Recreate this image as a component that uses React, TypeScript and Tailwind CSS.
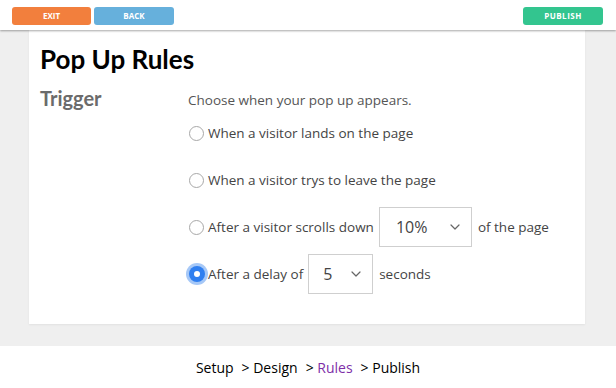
import { ReactNode } from 'react';

function Chevron() {
  return (
    <svg width="10" height="6" viewBox="0 0 10 6" className="text-[#666]">
      <path d="M1 1l4 4 4-4" fill="none" stroke="currentColor" strokeWidth="1.2" strokeLinecap="round" strokeLinejoin="round" />
    </svg>
  );
}

function Radio({ checked }: { checked?: boolean }) {
  if (checked) {
    return (
      <span className="flex h-[16px] w-[16px] shrink-0 items-center justify-center rounded-full bg-[#2f7ff0] shadow-[0_0_0_3px_#a6c8f7]">
        <span className="h-[6px] w-[6px] rounded-full bg-white" />
      </span>
    );
  }
  return <span className="h-[15px] w-[15px] shrink-0 rounded-full border border-[#a8a8a8] bg-white" />;
}

function Select({ value, width, pad }: { value: string; width: string; pad: string }) {
  return (
    <div className={`flex h-[40px] items-center justify-between border border-[#cfcfcf] bg-white pr-[11px] ${width} ${pad}`}>
      <span className="text-[16px] text-[#444]">{value}</span>
      <Chevron />
    </div>
  );
}

function Row({ checked, children }: { checked?: boolean; children: ReactNode }) {
  return (
    <div className="flex h-[40px] items-center">
      <div className="flex w-[20px] justify-start pl-[1px]">
        <Radio checked={checked} />
      </div>
      {children}
    </div>
  );
}

export default function App() {
  return (
    <div className="flex h-[388px] w-[616px] flex-col bg-white font-['Open_Sans',sans-serif]">
      <header className="relative z-10 flex h-[30px] shrink-0 items-start justify-between bg-white px-[12px] pt-[7px] shadow-[0_1px_2px_rgba(0,0,0,0.35)]">
        <div className="flex gap-[3px]">
          <button className="h-[18px] w-[79px] rounded-[3px] bg-[#f27f3d] text-[8px] font-bold text-white">EXIT</button>
          <button className="h-[18px] w-[80px] rounded-[3px] bg-[#66b0dc] text-[8px] font-bold text-white">BACK</button>
        </div>
        <button className="mr-[1px] h-[18px] w-[80px] rounded-[3px] bg-[#33c58f] text-[8px] font-bold tracking-[0.5px] text-white">PUBLISH</button>
      </header>

      <main className="h-[316px] shrink-0 bg-[#efefef] pl-[29px] pr-[31px] pb-[22px]">
        <div className="h-full bg-white pl-[11px] pt-[13px] shadow-[0_1px_2px_rgba(0,0,0,0.06)]">
          <h1 className="font-['Lato',sans-serif] text-[26px] leading-[32px] font-bold text-black">Pop Up Rules</h1>
          <div className="mt-[11px] flex">
            <div className="w-[148px] shrink-0 font-['Lato',sans-serif] text-[20px] leading-[24px] font-bold text-[#6b6b6b]">Trigger</div>
            <div className="flex flex-col text-[13.5px] text-[#444]">
              <p className="mt-[4px] h-[20px] leading-[20px] text-[#555]">Choose when your pop up appears.</p>
              <div className="mt-[3px] flex flex-col gap-[7px]">
                <Row>
                  <span>When a visitor lands on the page</span>
                </Row>
                <Row>
                  <span>When a visitor trys to leave the page</span>
                </Row>
                <Row>
                  <span className="mr-[5px]">After a visitor scrolls down</span>
                  <Select value="10%" width="w-[93px]" pad="pl-[16px]" />
                  <span className="ml-[6px]">of the page</span>
                </Row>
                <Row checked>
                  <span className="mr-[5px]">After a delay of</span>
                  <Select value="5" width="w-[65px]" pad="pl-[14px]" />
                  <span className="ml-[6px]">seconds</span>
                </Row>
              </div>
            </div>
          </div>
        </div>
      </main>

      <footer className="flex flex-1 items-center justify-center text-[14px] text-black">
        <span>Setup</span>
        <span className="ml-[8px]">&gt; Design</span>
        <span className="ml-[8px]">&gt; <span className="text-[#7e2ea8]">Rules</span></span>
        <span className="ml-[8px]">&gt; Publish</span>
      </footer>
    </div>
  );
}
